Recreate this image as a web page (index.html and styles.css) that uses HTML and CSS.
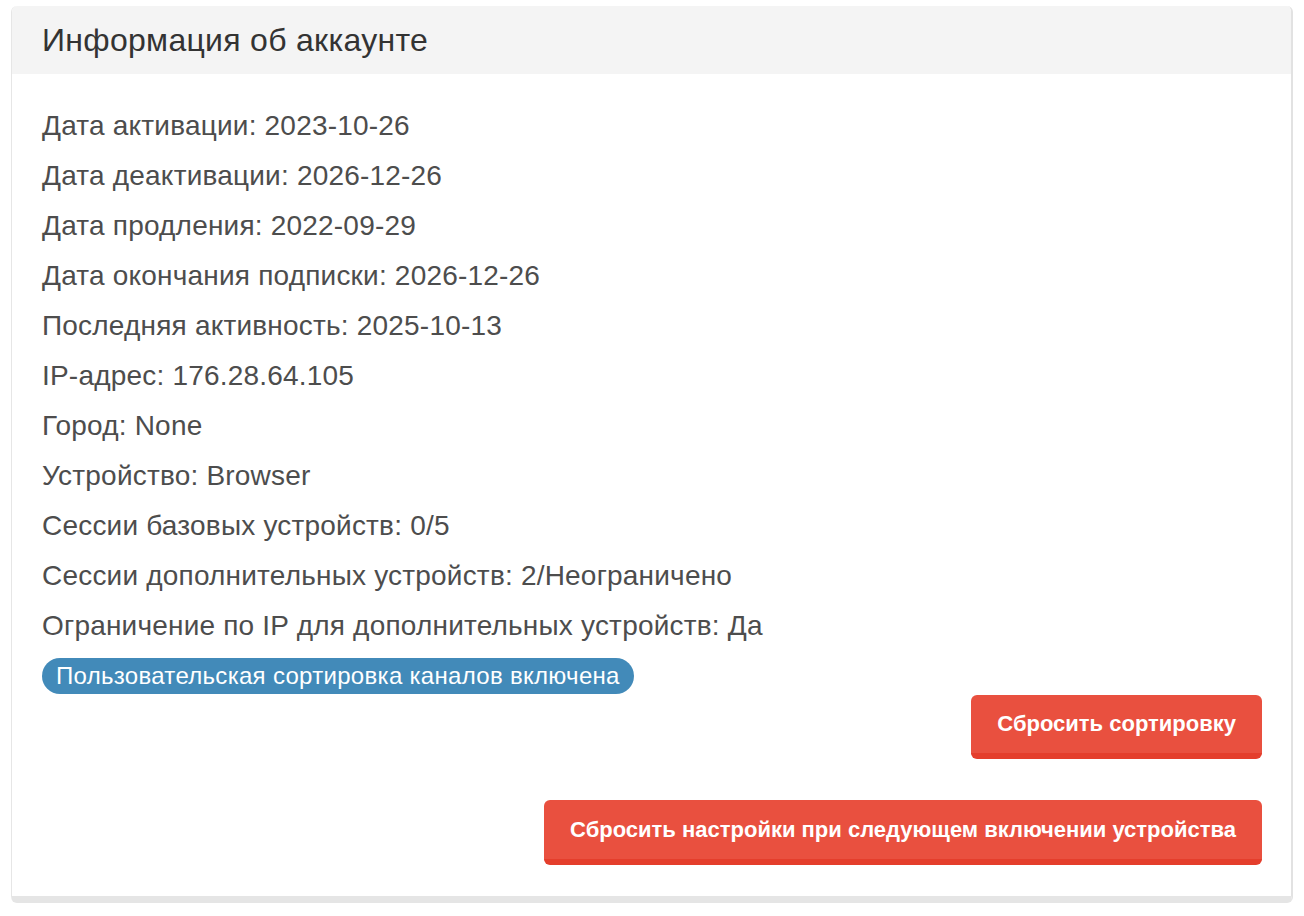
FILE: index.html
```html
<!DOCTYPE html>
<html lang="ru">
<head>
    <meta charset="UTF-8">
    <meta name="viewport" content="width=device-width, initial-scale=1.0">
    <title>Информация об аккаунте</title>
    <link rel="stylesheet" href="styles.css">
</head>
<body>
    <div class="account-box">
        <div class="account-header">
            <h3>Информация об аккаунте</h3>
        </div>
        <div class="account-body">
            <p>Дата активации: 2023-10-26</p>
            <p>Дата деактивации: 2026-12-26</p>
            <p>Дата продления: 2022-09-29</p>
            <p>Дата окончания подписки: 2026-12-26</p>
            <p>Последняя активность: 2025-10-13</p>
            <p>IP-адрес: 176.28.64.105</p>
            <p>Город: None</p>
            <p>Устройство: Browser</p>
            <p>Сессии базовых устройств: 0/5</p>
            <p>Сессии дополнительных устройств: 2/Неограничено</p>
            <p>Ограничение по IP для дополнительных устройств: Да</p>
            <div class="badge-row">
                <span class="badge">Пользовательская сортировка каналов включена</span>
            </div>
            <div class="actions">
                <button type="button" class="btn-red">Сбросить сортировку</button>
                <button type="button" class="btn-red btn-wide">Сбросить настройки при следующем включении устройства</button>
            </div>
        </div>
    </div>
</body>
</html>
```

FILE: styles.css
```css
body {
    margin: 0;
    background-color: #fff;
    font-family: "Liberation Sans", Arial, sans-serif;
}
.account-box {
    margin: 6px 11px 0 11px;
    border-left: 1px solid #e6e6e6;
    border-right: 2px solid #e2e2e2;
    border-bottom: 7px solid #e5e5e5;
    border-radius: 6px;
    overflow: hidden;
}
.account-header {
    background-color: #f4f4f4;
    height: 68px;
    display: flex;
    align-items: center;
    padding: 0 30px;
}
.account-header h3 {
    margin: 0;
    font-size: 32px;
    letter-spacing: 0.3px;
    font-weight: normal;
    color: #333;
}
.account-body {
    padding: 27px 29px 31px 30px;
    color: #4d4d4d;
}
.account-body p {
    margin: 0;
    font-size: 28px;
    letter-spacing: 0.2px;
    line-height: 50px;
}
.badge-row {
    margin-top: 7px;
}
.badge {
    display: inline-block;
    background-color: #428ab9;
    color: #fff;
    font-size: 24px;
    letter-spacing: 0.3px;
    line-height: 36px;
    padding: 0 14px;
    border-radius: 18px;
}
.actions {
    display: flex;
    flex-direction: column;
    align-items: flex-end;
    gap: 41px;
    margin-top: 1px;
}
.btn-red {
    background-color: #e9503f;
    border: none;
    border-bottom: 6px solid #e43e2c;
    border-radius: 6px;
    color: #fff;
    font-family: "Liberation Sans", Arial, sans-serif;
    font-weight: bold;
    font-size: 22px;
    height: 64px;
    padding: 0 26px;
    cursor: pointer;
}
.btn-wide {
    height: 65px;
}
```
